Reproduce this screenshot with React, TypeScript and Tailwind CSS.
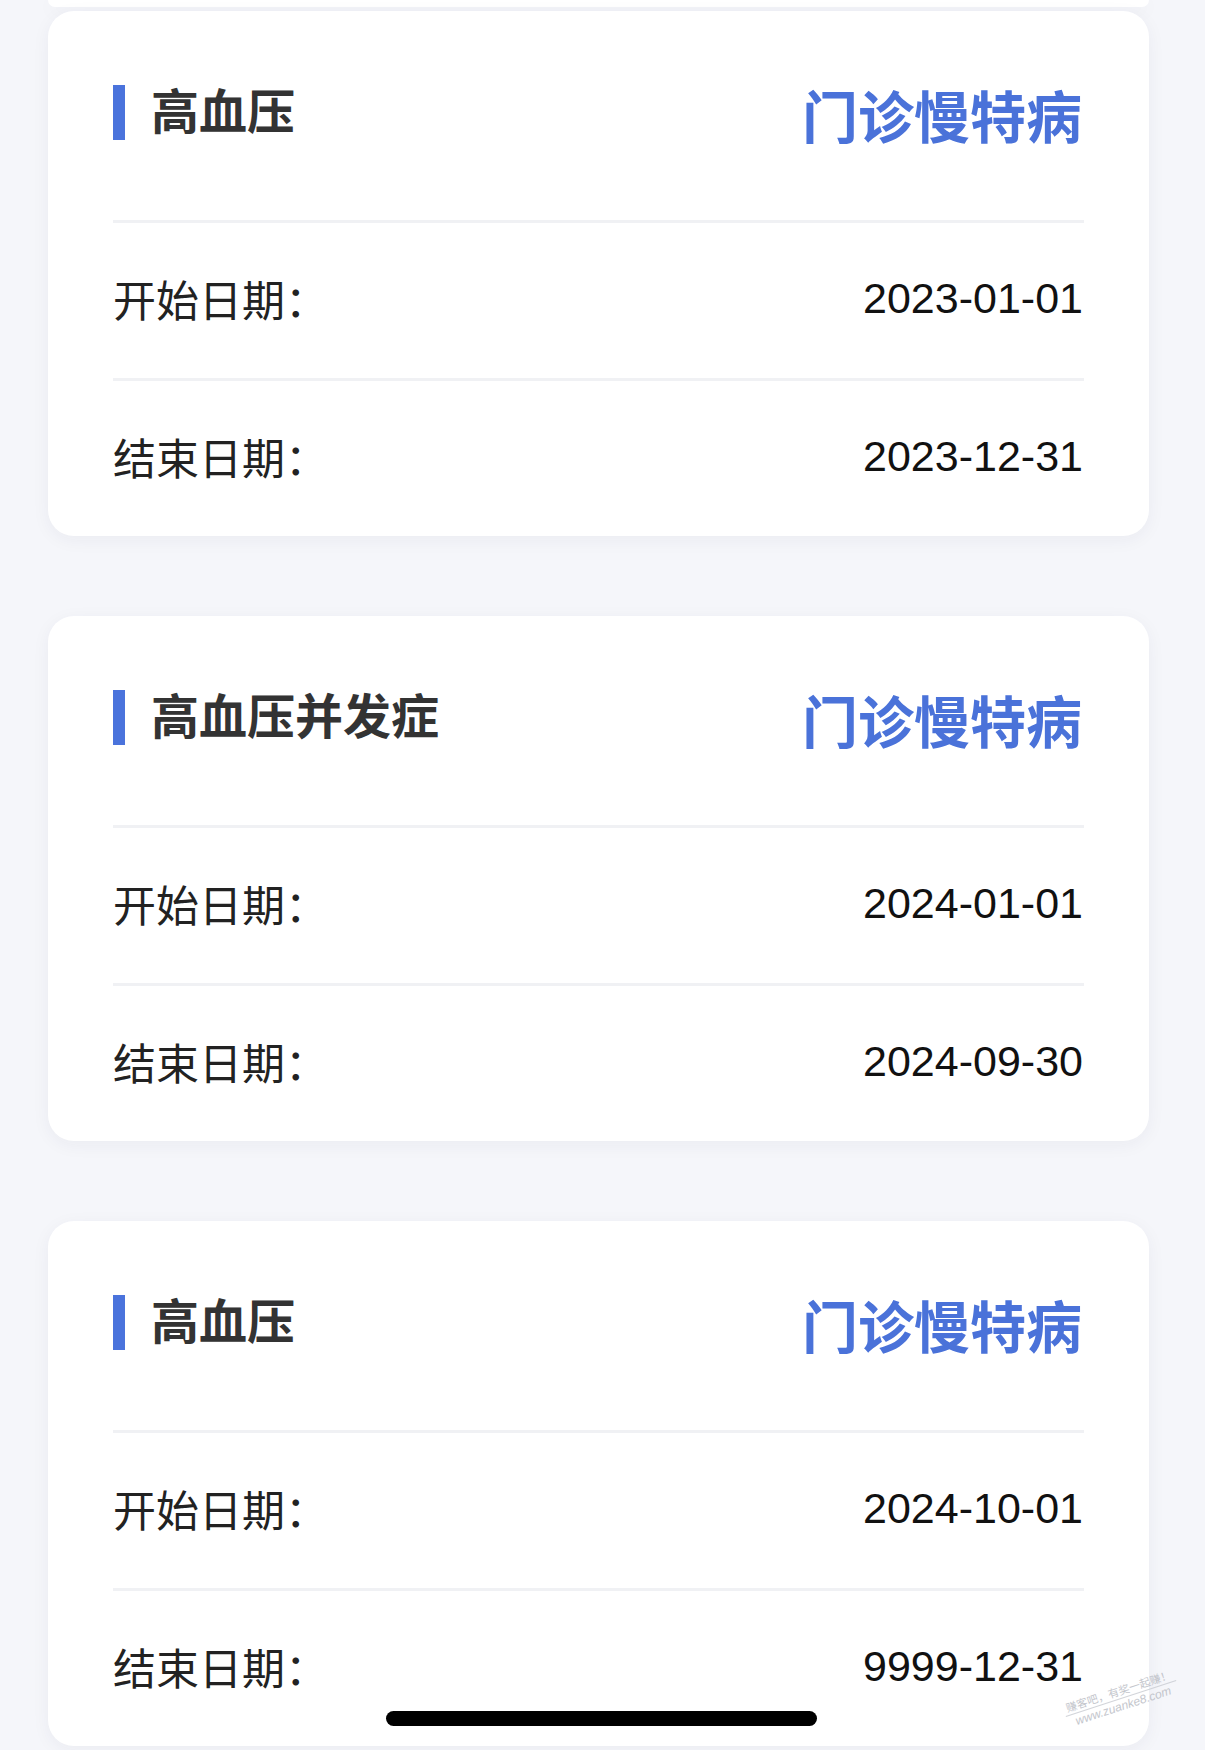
import React from 'react';

interface Record {
  name: string;
  category: string;
  start: string;
  end: string;
}

const RECORDS: Record[] = [
  { name: '高血压', category: '门诊慢特病', start: '2023-01-01', end: '2023-12-31' },
  { name: '高血压并发症', category: '门诊慢特病', start: '2024-01-01', end: '2024-09-30' },
  { name: '高血压', category: '门诊慢特病', start: '2024-10-01', end: '9999-12-31' },
];

const cjk = { fontFamily: '"Noto Sans CJK SC", "Noto Sans", sans-serif' };
const latin = { fontFamily: '"Liberation Sans", Arial, sans-serif' };

const InfoRow: React.FC<{ label: string; value: string }> = ({ label, value }) => (
  <div className="flex h-[155px] items-center justify-between pb-[5px]">
    <span className="text-[43px] leading-none text-[#222222]" style={cjk}>
      {label}
    </span>
    <span className="mr-[1px] text-[43px] leading-none text-[#111111]" style={latin}>
      {value}
    </span>
  </div>
);

const RecordCard: React.FC<{ record: Record }> = ({ record }) => (
  <div className="ml-[48px] w-[1101px] rounded-[26px] bg-white px-[65px] shadow-[0_4px_18px_rgba(30,40,80,0.05)]">
    <div className="flex h-[209px] items-start justify-between pt-[74px]">
      <div className="flex items-center">
        <div className="h-[55px] w-[12px] bg-[#4a73dc]" />
        <span
          className="ml-[26px] -mt-[8px] text-[48px] font-semibold leading-[55px] text-[#333333]"
          style={cjk}
        >
          {record.name}
        </span>
      </div>
      <span
        className="mt-[1px] mr-[2px] text-[56px] font-semibold leading-[56px] text-[#4a72d9]"
        style={cjk}
      >
        {record.category}
      </span>
    </div>
    <div className="h-[3px] bg-[#f0f1f4]" />
    <InfoRow label="开始日期：" value={record.start} />
    <div className="h-[3px] bg-[#f0f1f4]" />
    <InfoRow label="结束日期：" value={record.end} />
  </div>
);

export default function App() {
  return (
    <div className="relative h-[1750px] w-[1205px] overflow-hidden bg-[#f5f6fa]">
      {/* tail of the card above */}
      <div className="ml-[48px] h-[7px] w-[1101px] rounded-b-[26px] bg-white shadow-[0_4px_18px_rgba(30,40,80,0.05)]" />
      <div className="mt-[4px] flex flex-col gap-[80px]">
        {RECORDS.map((r, i) => (
          <RecordCard key={i} record={r} />
        ))}
      </div>

      {/* watermark */}
      <div
        className="absolute left-[1058px] top-[1684px] w-[126px] origin-center -rotate-[18deg] text-center text-[#b5b8bf] opacity-80"
        style={cjk}
      >
        <div className="text-[11px] leading-[13px]">赚客吧，有奖一起赚！</div>
        <div className="mx-auto my-[1px] h-px w-[116px] bg-[#c8cbd1]" />
        <div className="text-[12px] italic leading-[13px]" style={latin}>
          www.zuanke8.com
        </div>
      </div>

      {/* home indicator */}
      <div className="absolute left-[386px] top-[1711px] h-[15px] w-[431px] rounded-full bg-black" />
    </div>
  );
}
